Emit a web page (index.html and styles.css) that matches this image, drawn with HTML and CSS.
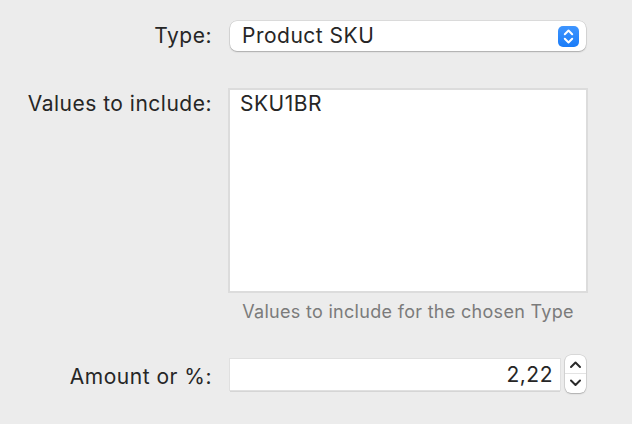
FILE: index.html
```html
<!DOCTYPE html>
<html>
<head>
<meta charset="utf-8">
<link rel="stylesheet" href="styles.css">
</head>
<body>
<div class="form">
  <div class="label label-type">Type:</div>
  <div class="popup">
    <span class="popup-text">Product SKU</span>
    <span class="popup-arrows">
      <svg width="21" height="21" viewBox="0 0 21 21"><path d="M6.8 8.2 L10.5 4.5 L14.2 8.2 M6.8 12.8 L10.5 16.5 L14.2 12.8" fill="none" stroke="#fff" stroke-width="2" stroke-linecap="round" stroke-linejoin="round"/></svg>
    </span>
  </div>

  <div class="label label-values">Values to include:</div>
  <div class="values-col">
    <div class="textarea">SKU1BR</div>
    <div class="hint">Values to include for the chosen Type</div>
  </div>

  <div class="label label-amount">Amount or %:</div>
  <div class="amount-row">
    <div class="number-field">2,22</div>
    <div class="stepper">
      <div class="step step-up"><svg width="21" height="18" viewBox="0 0 21 18"><path d="M6 12 L10.5 7.5 L15 12" fill="none" stroke="#2b2b2b" stroke-width="2" stroke-linecap="round" stroke-linejoin="round"/></svg></div>
      <div class="step step-down"><svg width="21" height="18" viewBox="0 0 21 18"><path d="M6 5.5 L10.5 10 L15 5.5" fill="none" stroke="#2b2b2b" stroke-width="2" stroke-linecap="round" stroke-linejoin="round"/></svg></div>
    </div>
  </div>
</div>
</body>
</html>
```
FILE: styles.css
```css
html, body {
  margin: 0;
  padding: 0;
  background: #ececec;
}
body {
  width: 632px;
  height: 424px;
  overflow: hidden;
  font-family: Inter, "Noto Sans", sans-serif;
  font-size: 21px;
  letter-spacing: 0.5px;
  color: #262626;
}
.form {
  display: grid;
  grid-template-columns: 211px 356px;
  column-gap: 19px;
  padding-top: 21px;
}
.label {
  text-align: right;
  line-height: 24px;
  white-space: nowrap;
  margin-right: -1px;
}
.label-type {
  align-self: center;
}
.popup {
  height: 30px;
  box-sizing: border-box;
  background: #fff;
  border-radius: 7px;
  box-shadow: 0 0 0 0.5px rgba(0,0,0,0.14), 0 1px 1.5px rgba(0,0,0,0.22);
  display: flex;
  align-items: center;
  justify-content: space-between;
  padding: 0 7px 0 12px;
}
.popup-text {
  line-height: 24px;
}
.popup-arrows {
  width: 21px;
  height: 21px;
  border-radius: 5px;
  background: linear-gradient(#3e95ff, #1a7cf8);
  display: flex;
}
.label-values {
  margin-top: 41px;
}
.values-col {
  margin-top: 39px;
  display: flex;
  flex-direction: column;
}
.textarea {
  height: 201px;
  box-sizing: border-box;
  background: #fff;
  box-shadow: 0 0 0 2px #dcdcdc;
  padding: 2px 10px;
  line-height: 24px;
}
.hint {
  margin-top: 10px;
  text-align: center;
  font-size: 18px;
  letter-spacing: 0.3px;
  line-height: 22px;
  color: #7b7b7b;
}
.label-amount {
  margin-top: 38px;
  align-self: center;
}
.amount-row {
  margin-top: 32px;
  display: flex;
  align-items: center;
  gap: 5px;
}
.number-field {
  width: 330px;
  height: 31px;
  box-sizing: border-box;
  background: #fff;
  box-shadow: 0 0 0 1px #e0e0e0, 0 1.5px 0 #bdbdbd;
  text-align: right;
  padding: 0 7px;
  line-height: 31px;
}
.stepper {
  width: 21px;
  height: 38px;
  border-radius: 6px;
  background: #fff;
  box-shadow: 0 0 0 0.5px rgba(0,0,0,0.16), 0 1px 1.5px rgba(0,0,0,0.2);
  display: flex;
  flex-direction: column;
  overflow: hidden;
}
.step {
  height: 19px;
  display: flex;
  align-items: center;
}
.step-up {
  border-bottom: 1px solid #e3e3e3;
  height: 18px;
}
```
